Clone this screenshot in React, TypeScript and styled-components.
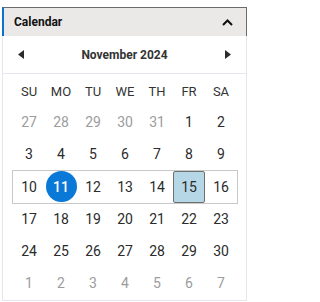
import React from "react";
import styled, { createGlobalStyle } from "styled-components";

const Global = createGlobalStyle`
  html, body { margin: 0; padding: 0; background: #ffffff; }
  body { font-family: Roboto, "Liberation Sans", Arial, sans-serif; }
  * { box-sizing: border-box; }
`;

const Panel = styled.div`
  margin: 7px 0 0 2px;
  width: 245px;
`;

const Header = styled.div`
  height: 29px;
  display: flex;
  align-items: center;
  justify-content: space-between;
  background: #ebe9e7;
  border-top: 1px solid #6b6b6b;
  border-right: 1px solid #6b6b6b;
  border-left: 2px solid #0a72cf;
  padding: 0 13px 0 10px;
`;

const Title = styled.span`
  font-size: 12px;
  font-weight: 700;
  color: #111;
`;

const Body = styled.div`
  border: 1px solid #e6e6ee;
  border-top: none;
  padding-bottom: 1px;
`;

const Nav = styled.div`
  height: 38px;
  display: flex;
  align-items: center;
  justify-content: space-between;
  padding: 0 13px 0 13px;
  border-bottom: 1px solid #e6e6ee;
`;

const Month = styled.span`
  font-size: 12px;
  font-weight: 700;
  color: #333;
`;

const Grid = styled.div`
  padding: 2px 9px 0 10px;
`;

const Row = styled.div<{ $week?: boolean; $head?: boolean }>`
  display: grid;
  grid-template-columns: repeat(7, 32px);
  height: ${(p) => (p.$head ? "30px" : "32px")};
  outline: ${(p) => (p.$week ? "1px solid #c9c9c9" : "none")};
  margin: ${(p) => (p.$week ? "1px 0 0" : "0")};
`;

const Head = styled.div`
  display: flex;
  align-items: center;
  justify-content: center;
  font-size: 13px;
  color: #333;
`;

const Day = styled.div<{ $muted?: boolean; $today?: boolean; $sel?: boolean }>`
  display: flex;
  align-items: center;
  justify-content: center;
  font-size: 14px;
  color: ${(p) => (p.$muted ? "#9c9c9c" : p.$today ? "#fff" : "#2b2b2b")};
  font-weight: ${(p) => (p.$today ? 500 : 400)};
  position: relative;
  z-index: 0;
  ${(p) =>
    p.$sel
      ? `background: #b6d7e6; border: 1px solid #6f6f6f; border-radius: 2px;`
      : ""}
  ${(p) =>
    p.$today
      ? `&::before { content: ""; position: absolute; z-index: -1; width: 31px; height: 31px; border-radius: 50%; background: #0a78d6; left: 1px; top: 0px; }`
      : ""}
`;

const ArrowBtn = styled.span`
  display: inline-flex;
  width: 10px;
  justify-content: center;
`;

const Chevron = () => (
  <svg width="11" height="7" viewBox="0 0 11 7">
    <path d="M1 6 L5.5 1.5 L10 6" fill="none" stroke="#111" strokeWidth="2" />
  </svg>
);

const Tri = ({ dir }: { dir: "l" | "r" }) => (
  <svg width="6" height="9" viewBox="0 0 6 9">
    {dir === "l" ? (
      <path d="M6 0 L0 4.5 L6 9 Z" fill="#2b2b2b" />
    ) : (
      <path d="M0 0 L6 4.5 L0 9 Z" fill="#2b2b2b" />
    )}
  </svg>
);

const weeks: { n: number; m?: boolean }[][] = [
  [27, 28, 29, 30, 31].map((n) => ({ n, m: true })).concat([{ n: 1 }, { n: 2 }]),
  [3, 4, 5, 6, 7, 8, 9].map((n) => ({ n })),
  [10, 11, 12, 13, 14, 15, 16].map((n) => ({ n })),
  [17, 18, 19, 20, 21, 22, 23].map((n) => ({ n })),
  [24, 25, 26, 27, 28, 29, 30].map((n) => ({ n })),
  [1, 2, 3, 4, 5, 6, 7].map((n) => ({ n, m: true })),
];

export default function App() {
  return (
    <>
      <Global />
      <Panel>
        <Header>
          <Title>Calendar</Title>
          <Chevron />
        </Header>
        <Body>
          <Nav>
            <ArrowBtn>
              <Tri dir="l" />
            </ArrowBtn>
            <Month>November 2024</Month>
            <ArrowBtn>
              <Tri dir="r" />
            </ArrowBtn>
          </Nav>
          <Grid>
            <Row $head>
              {["SU", "MO", "TU", "WE", "TH", "FR", "SA"].map((d) => (
                <Head key={d}>{d}</Head>
              ))}
            </Row>
            {weeks.map((w, i) => (
              <Row key={i} $week={i === 2}>
                {w.map((d, j) => (
                  <Day
                    key={j}
                    $muted={d.m}
                    $today={i === 2 && d.n === 11}
                    $sel={i === 2 && d.n === 15}
                  >
                    {d.n}
                  </Day>
                ))}
              </Row>
            ))}
          </Grid>
        </Body>
      </Panel>
    </>
  );
}
